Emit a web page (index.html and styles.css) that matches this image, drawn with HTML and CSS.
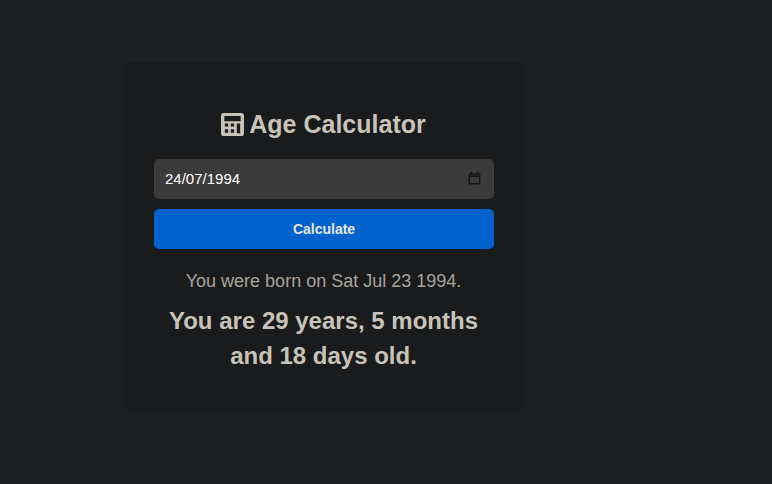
FILE: index.html
```html
<!DOCTYPE html>
<html lang="en">
<head>
<meta charset="utf-8">
<title>Age Calculator</title>
<link rel="stylesheet" href="styles.css">
</head>
<body>
<main class="card">
  <h1 class="title">
    <svg class="calc" viewBox="0 0 24 24" aria-hidden="true"><path fill-rule="evenodd" d="M3 0H21A3 3 0 0 1 24 3V21A3 3 0 0 1 21 24H3A3 3 0 0 1 0 21V3A3 3 0 0 1 3 0ZM3.500 3V8.500H20.500V3ZM4 11V14H7.500V11ZM10.200 11V14H13.700V11ZM16.500 11V21H20V11ZM4 17V20.500H7.500V17ZM10.200 17V20.500H13.700V17Z"/></svg>
    <span>Age Calculator</span>
  </h1>
  <div class="field">
    <input class="date" type="text" value="24/07/1994" aria-label="Birth date">
    <svg class="cal" viewBox="0 0 14 14" aria-hidden="true"><path d="M3.500 0V2M10.500 0V2" stroke-width="1.600"/><rect x="1.300" y="2.100" width="11.400" height="10.600" rx="1" stroke-width="1.500"/><path d="M1.500 4.500H12.500" stroke-width="2"/></svg>
  </div>
  <button class="btn" type="button">Calculate</button>
  <p class="born">You were born on Sat Jul 23 1994.</p>
  <p class="age">You are 29 years, 5 months<br>and 18 days old.</p>
</main>
</body>
</html>
```
FILE: styles.css
```css
* { box-sizing: border-box; }
html, body { height: 100%; }
body {
  margin: 0;
  background: #1d2021;
  font-family: "Liberation Sans", Arial, sans-serif;
  padding: 62px 0 0 124px;
  overflow: hidden;
}
.card {
  width: 400px;
  height: 350px;
  padding: 46px 30px 0;
  background: #1a1b1d;
  border-radius: 8px;
  text-align: center;
}
.title {
  margin: 0 0 19px;
  height: 32px;
  padding-right: 1px;
  display: flex;
  align-items: center;
  justify-content: center;
  gap: 5px;
  color: #c8c3b8;
  font-size: 25px;
  font-weight: 700;
  line-height: 32px;
}
.calc { width: 23px; height: 25px; fill: #c8c3b8; }
.field {
  height: 40px;
  display: flex;
  align-items: center;
  padding: 0 13px 2px 11px;
  background: #3b3b3b;
  border-radius: 5px;
}
.date {
  flex: 1;
  min-width: 0;
  padding: 0;
  border: 0;
  outline: 0;
  background: transparent;
  color: #fff;
  font: 15px "Liberation Sans", Arial, sans-serif;
}
.cal { width: 13px; height: 13px; fill: none; stroke: #151515; }
.btn {
  display: block;
  width: 100%;
  height: 40px;
  margin-top: 10px;
  border: 0;
  border-radius: 5px;
  background: #0062cc;
  color: #e8e6e3;
  font: 700 14px "Liberation Sans", Arial, sans-serif;
}
.born {
  margin: 22px 0 0;
  padding-right: 1px;
  color: #a8a49c;
  font-size: 18px;
  line-height: 21px;
}
.age {
  margin: 11px 0 0;
  padding-right: 1px;
  color: #c8c3b8;
  font-size: 24px;
  font-weight: 700;
  line-height: 35px;
}
```
